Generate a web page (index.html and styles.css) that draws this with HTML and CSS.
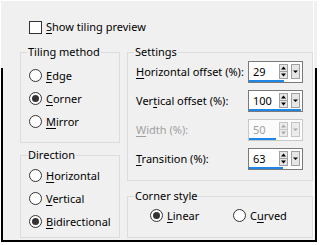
FILE: index.html
```html
<!DOCTYPE html>
<html lang="en">
<head>
    <meta charset="UTF-8">
    <title>Tile settings</title>
    <link rel="stylesheet" href="styles.css">
</head>
<body>

<div class="dialog">
    <label class="check-row">
        <span class="checkbox"></span>
        <span><u>S</u>how tiling preview</span>
    </label>

    <div class="columns">
        <div class="col-left">
            <fieldset class="group group-tiling">
                <legend>Tiling method</legend>
                <label class="option"><span class="radio"></span><span><u>E</u>dge</span></label>
                <label class="option"><span class="radio checked"></span><span><u>C</u>orner</span></label>
                <label class="option"><span class="radio"></span><span><u>M</u>irror</span></label>
            </fieldset>
            <fieldset class="group group-direction">
                <legend>Direction</legend>
                <label class="option"><span class="radio"></span><span><u>H</u>orizontal</span></label>
                <label class="option"><span class="radio"></span><span><u>V</u>ertical</span></label>
                <label class="option"><span class="radio checked"></span><span><u>B</u>idirectional</span></label>
            </fieldset>
        </div>

        <div class="col-right">
            <fieldset class="group group-settings">
                <legend>Settings</legend>
                <div class="field">
                    <span class="field-label"><u>H</u>orizontal offset (%):</span>
                    <div class="spin">
                        <span class="spin-value">29</span>
                        <svg class="spin-buttons" width="22" height="16" viewBox="0 0 22 16">
                            <rect x="0.5" y="0.5" width="8" height="7" fill="#e6e6e6" stroke="#a0a0a0"/>
                            <polygon points="2,5.5 7,5.5 4.5,2.5" fill="#000"/>
                            <rect x="0.5" y="7.5" width="8" height="7" fill="#e6e6e6" stroke="#a0a0a0"/>
                            <polygon points="2,9.5 7,9.5 4.5,12.5" fill="#000"/>
                            <rect x="12.5" y="0.5" width="8" height="14" fill="#e6e6e6" stroke="#a0a0a0"/>
                            <polygon points="14,6.5 19,6.5 16.5,9" fill="#000"/>
                        </svg>
                        <span class="spin-bar" style="width: 35px"></span>
                    </div>
                </div>
                <div class="field">
                    <span class="field-label">Ver<u>t</u>ical offset (%):</span>
                    <div class="spin">
                        <span class="spin-value">100</span>
                        <svg class="spin-buttons" width="22" height="16" viewBox="0 0 22 16">
                            <rect x="0.5" y="0.5" width="8" height="7" fill="#e6e6e6" stroke="#a0a0a0"/>
                            <polygon points="2,5.5 7,5.5 4.5,2.5" fill="#000"/>
                            <rect x="0.5" y="7.5" width="8" height="7" fill="#e6e6e6" stroke="#a0a0a0"/>
                            <polygon points="2,9.5 7,9.5 4.5,12.5" fill="#000"/>
                            <rect x="12.5" y="0.5" width="8" height="14" fill="#e6e6e6" stroke="#a0a0a0"/>
                            <polygon points="14,6.5 19,6.5 16.5,9" fill="#000"/>
                        </svg>
                        <span class="spin-bar" style="width: 52px"></span>
                    </div>
                </div>
                <div class="field disabled">
                    <span class="field-label"><u>W</u>idth (%):</span>
                    <div class="spin">
                        <span class="spin-value">50</span>
                        <svg class="spin-buttons" width="22" height="16" viewBox="0 0 22 16">
                            <rect x="0.5" y="0.5" width="8" height="7" fill="#ececec" stroke="#c4c4c4"/>
                            <polygon points="2,5.5 7,5.5 4.5,2.5" fill="#a8a8a8"/>
                            <rect x="0.5" y="7.5" width="8" height="7" fill="#ececec" stroke="#c4c4c4"/>
                            <polygon points="2,9.5 7,9.5 4.5,12.5" fill="#a8a8a8"/>
                            <rect x="12.5" y="0.5" width="8" height="14" fill="#ececec" stroke="#c4c4c4"/>
                            <polygon points="14,6.5 19,6.5 16.5,9" fill="#a8a8a8"/>
                        </svg>
                        <span class="spin-bar" style="width: 27px"></span>
                    </div>
                </div>
                <div class="field">
                    <span class="field-label"><u>T</u>ransition (%):</span>
                    <div class="spin">
                        <span class="spin-value">63</span>
                        <svg class="spin-buttons" width="22" height="16" viewBox="0 0 22 16">
                            <rect x="0.5" y="0.5" width="8" height="7" fill="#e6e6e6" stroke="#a0a0a0"/>
                            <polygon points="2,5.5 7,5.5 4.5,2.5" fill="#000"/>
                            <rect x="0.5" y="7.5" width="8" height="7" fill="#e6e6e6" stroke="#a0a0a0"/>
                            <polygon points="2,9.5 7,9.5 4.5,12.5" fill="#000"/>
                            <rect x="12.5" y="0.5" width="8" height="14" fill="#e6e6e6" stroke="#a0a0a0"/>
                            <polygon points="14,6.5 19,6.5 16.5,9" fill="#000"/>
                        </svg>
                        <span class="spin-bar" style="width: 34px"></span>
                    </div>
                </div>
            </fieldset>

            <fieldset class="group group-corner">
                <legend>Corner style</legend>
                <div class="corner-row">
                    <label class="option option-linear"><span class="radio checked"></span><span><u>L</u>inear</span></label>
                    <label class="option"><span class="radio"></span><span>C<u>u</u>rved</span></label>
                </div>
            </fieldset>
        </div>
    </div>
</div>

</body>
</html>
```

FILE: styles.css
```css
body {
    margin: 0;
    background-color: #fff;
    font-family: 'Noto Sans', sans-serif;
    font-size: 11px;
    line-height: 16px;
    color: #000;
}
.dialog {
    box-sizing: border-box;
    width: 316px;
    height: 241px;
    margin: 1px 0 0 1px;
    padding: 18px 1px 0 17px;
    background-color: #f0f0f0;
    border-style: solid;
    border-width: 0 2px 2px 2px;
    border-image: linear-gradient(to bottom, #f0f0f0 68px, #000 68px) 1;
    box-shadow: inset -1px 0 #f0f0f0, inset -2px 0 #fff;
}
u {
    text-decoration-thickness: 1px;
    text-underline-offset: 2px;
}
.check-row {
    display: flex;
    align-items: center;
    gap: 4px;
    height: 16px;
    margin-left: 9px;
}
.checkbox {
    box-sizing: border-box;
    width: 13px;
    height: 13px;
    border: 1px solid #333;
    background-color: #fff;
}
.columns {
    display: flex;
    gap: 7px;
    margin-top: 9px;
}
.col-left {
    display: flex;
    flex-direction: column;
    gap: 4px;
    width: 100px;
}
.col-right {
    display: flex;
    flex-direction: column;
    gap: 7px;
    width: 186px;
}
.group {
    box-sizing: border-box;
    margin: 0;
    padding: 0 8px;
    min-width: 0;
    border: 1px solid #dcdcdc;
}
.group legend {
    padding: 0 1px;
    margin-left: -2px;
    line-height: 16px;
}
.group-tiling {
    height: 99px;
    padding-top: 4px;
}
.group-direction {
    height: 91px;
    padding-top: 1px;
}
.group-settings {
    height: 137px;
    padding: 1px 9px 0 8px;
}
.group-corner {
    height: 50px;
}
.option {
    display: flex;
    align-items: center;
    gap: 4px;
    height: 23px;
}
.radio {
    box-sizing: border-box;
    position: relative;
    flex: none;
    width: 13px;
    height: 13px;
    border: 1px solid #333;
    border-radius: 50%;
    background-color: #fff;
}
.radio.checked::after {
    content: "";
    position: absolute;
    left: 2px;
    top: 2px;
    width: 7px;
    height: 7px;
    border-radius: 50%;
    background-color: #333;
}
.corner-row {
    display: flex;
    padding-left: 14px;
}
.option-linear {
    width: 83px;
}
.field {
    display: flex;
    align-items: center;
    height: 22px;
    margin-bottom: 7px;
}
.field-label {
    flex: 1;
    white-space: nowrap;
}
.spin {
    box-sizing: border-box;
    position: relative;
    display: flex;
    align-items: center;
    width: 55px;
    height: 22px;
    padding-left: 4px;
    border: 1px solid #7a7a7a;
    background-color: #fff;
}
.spin-value {
    flex: 1;
}
.spin-buttons {
    display: block;
    margin-right: 1px;
}
.spin-bar {
    position: absolute;
    left: 0;
    bottom: 0;
    height: 2px;
    background-color: #1e86e6;
}
.disabled .field-label,
.disabled .spin-value {
    color: #a0a0a0;
}
.disabled .spin {
    border-color: #c8c8c8;
    background-color: #fbfbfb;
}
```
